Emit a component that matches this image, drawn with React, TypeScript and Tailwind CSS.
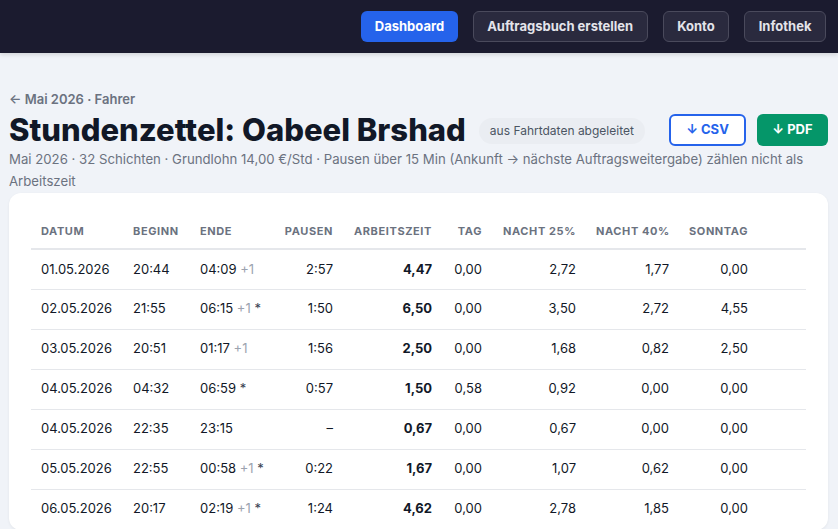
import React from "react";

type Row = {
  date: string;
  start: string;
  end: string;
  next?: boolean;
  star?: boolean;
  pause: string;
  work: string;
  day: string;
  n25: string;
  n40: string;
  sun: string;
};

const rows: Row[] = [
  { date: "01.05.2026", start: "20:44", end: "04:09", next: true, pause: "2:57", work: "4,47", day: "0,00", n25: "2,72", n40: "1,77", sun: "0,00" },
  { date: "02.05.2026", start: "21:55", end: "06:15", next: true, star: true, pause: "1:50", work: "6,50", day: "0,00", n25: "3,50", n40: "2,72", sun: "4,55" },
  { date: "03.05.2026", start: "20:51", end: "01:17", next: true, pause: "1:56", work: "2,50", day: "0,00", n25: "1,68", n40: "0,82", sun: "2,50" },
  { date: "04.05.2026", start: "04:32", end: "06:59", star: true, pause: "0:57", work: "1,50", day: "0,58", n25: "0,92", n40: "0,00", sun: "0,00" },
  { date: "04.05.2026", start: "22:35", end: "23:15", pause: "–", work: "0,67", day: "0,00", n25: "0,67", n40: "0,00", sun: "0,00" },
  { date: "05.05.2026", start: "22:55", end: "00:58", next: true, star: true, pause: "0:22", work: "1,67", day: "0,00", n25: "1,07", n40: "0,62", sun: "0,00" },
  { date: "06.05.2026", start: "20:17", end: "02:19", next: true, star: true, pause: "1:24", work: "4,62", day: "0,00", n25: "2,78", n40: "1,85", sun: "0,00" },
];

function NavButton({ label, active }: { label: string; active?: boolean }) {
  return (
    <button
      className={`h-[31px] rounded-md px-[13.5px] text-[13px] font-bold ${
        active
          ? "bg-[#2563eb] text-white"
          : "border border-[#4a4a5c] bg-[#2a2a3e] text-[#e4e4ea]"
      }`}
    >
      {label}
    </button>
  );
}

export default function App() {
  return (
    <div
      className="min-h-screen bg-[#f0f3f8] text-[#111827]"
      style={{ fontFamily: "Inter, 'Noto Sans', sans-serif" }}
    >
      <header className="flex h-[53px] items-center justify-end gap-[15px] bg-[#1b1b2f] pr-[12px] shadow-[0_2px_4px_rgba(0,0,0,0.12)]">
        <NavButton label="Dashboard" active />
        <NavButton label="Auftragsbuch erstellen" />
        <NavButton label="Konto" />
        <NavButton label="Infothek" />
      </header>

      <main className="pl-[9px] pr-[10px] pt-[36px]">
        <p className="text-[13px] font-semibold leading-5 text-[#6b7280]">
          ← Mai 2026 · Fahrer
        </p>

        <div className="mt-[3px] flex h-[36px] items-center">
          <h1 className="whitespace-nowrap text-[31px] font-extrabold leading-9 text-[#111827]">
            Stundenzettel: Oabeel Brshad
          </h1>
          <span className="ml-[13px] mt-[2px] rounded-full bg-[#eaedf2] px-[11px] py-[4px] text-[12px] text-[#4b5563]">
            aus Fahrtdaten abgeleitet
          </span>
          <div className="ml-auto flex items-center gap-[11px]">
            <button className="h-[32px] w-[77px] rounded-md border-2 border-[#2563eb] bg-white text-[13px] font-bold text-[#2563eb]">
              ↓ CSV
            </button>
            <button className="h-[32px] w-[71px] rounded-md bg-[#059669] text-[13px] font-bold text-white">
              ↓ PDF
            </button>
          </div>
        </div>

        <p className="text-[13.2px] leading-[22px] text-[#6b7280]">
          Mai 2026 · 32 Schichten · Grundlohn 14,00 €/Std · Pausen über 15 Min (Ankunft → nächste
          Auftragsweitergabe) zählen nicht als Arbeitszeit
        </p>

        <div className="mt-px rounded-xl bg-white px-[22px] pt-[22px] shadow-[0_1px_3px_rgba(0,0,0,0.06)]">
          <table className="w-full table-fixed border-collapse text-[13px]">
            <colgroup>
              <col className="w-[92px]" />
              <col className="w-[67px]" />
              <col className="w-[80px]" />
              <col className="w-[73px]" />
              <col className="w-[99px]" />
              <col className="w-[50px]" />
              <col className="w-[94px]" />
              <col className="w-[93px]" />
              <col className="w-[79px]" />
              <col />
            </colgroup>
            <thead>
              <tr className="h-[34px] whitespace-nowrap border-b-2 border-[#e5e7eb] text-[11px] font-bold uppercase tracking-[0.6px] text-[#6b7280]">
                <th className="px-[10px] text-left font-bold">Datum</th>
                <th className="px-[10px] text-left font-bold">Beginn</th>
                <th className="px-[10px] text-left font-bold">Ende</th>
                <th className="px-[10px] text-right font-bold">Pausen</th>
                <th className="px-[10px] text-right font-bold">Arbeitszeit</th>
                <th className="px-[10px] text-right font-bold">Tag</th>
                <th className="px-[10px] text-right font-bold">Nacht 25%</th>
                <th className="px-[10px] text-right font-bold">Nacht 40%</th>
                <th className="px-[10px] text-right font-bold">Sonntag</th>
                <th />
              </tr>
            </thead>
            <tbody>
              {rows.map((r, i) => (
                <tr key={i} className="h-[40px] border-b border-[#e5e7eb]">
                  <td className="px-[10px]">{r.date}</td>
                  <td className="px-[10px]">{r.start}</td>
                  <td className="whitespace-nowrap px-[10px]">
                    {r.end}
                    {r.next && <span className="text-[#9ca3af]"> +1</span>}
                    {r.star && <span className="text-[#374151]"> *</span>}
                  </td>
                  <td className="px-[10px] text-right">{r.pause}</td>
                  <td className="px-[10px] text-right font-bold">{r.work}</td>
                  <td className="px-[10px] text-right">{r.day}</td>
                  <td className="px-[10px] text-right">{r.n25}</td>
                  <td className="px-[10px] text-right">{r.n40}</td>
                  <td className="px-[10px] text-right">{r.sun}</td>
                  <td />
                </tr>
              ))}
            </tbody>
          </table>
        </div>
      </main>
    </div>
  );
}
